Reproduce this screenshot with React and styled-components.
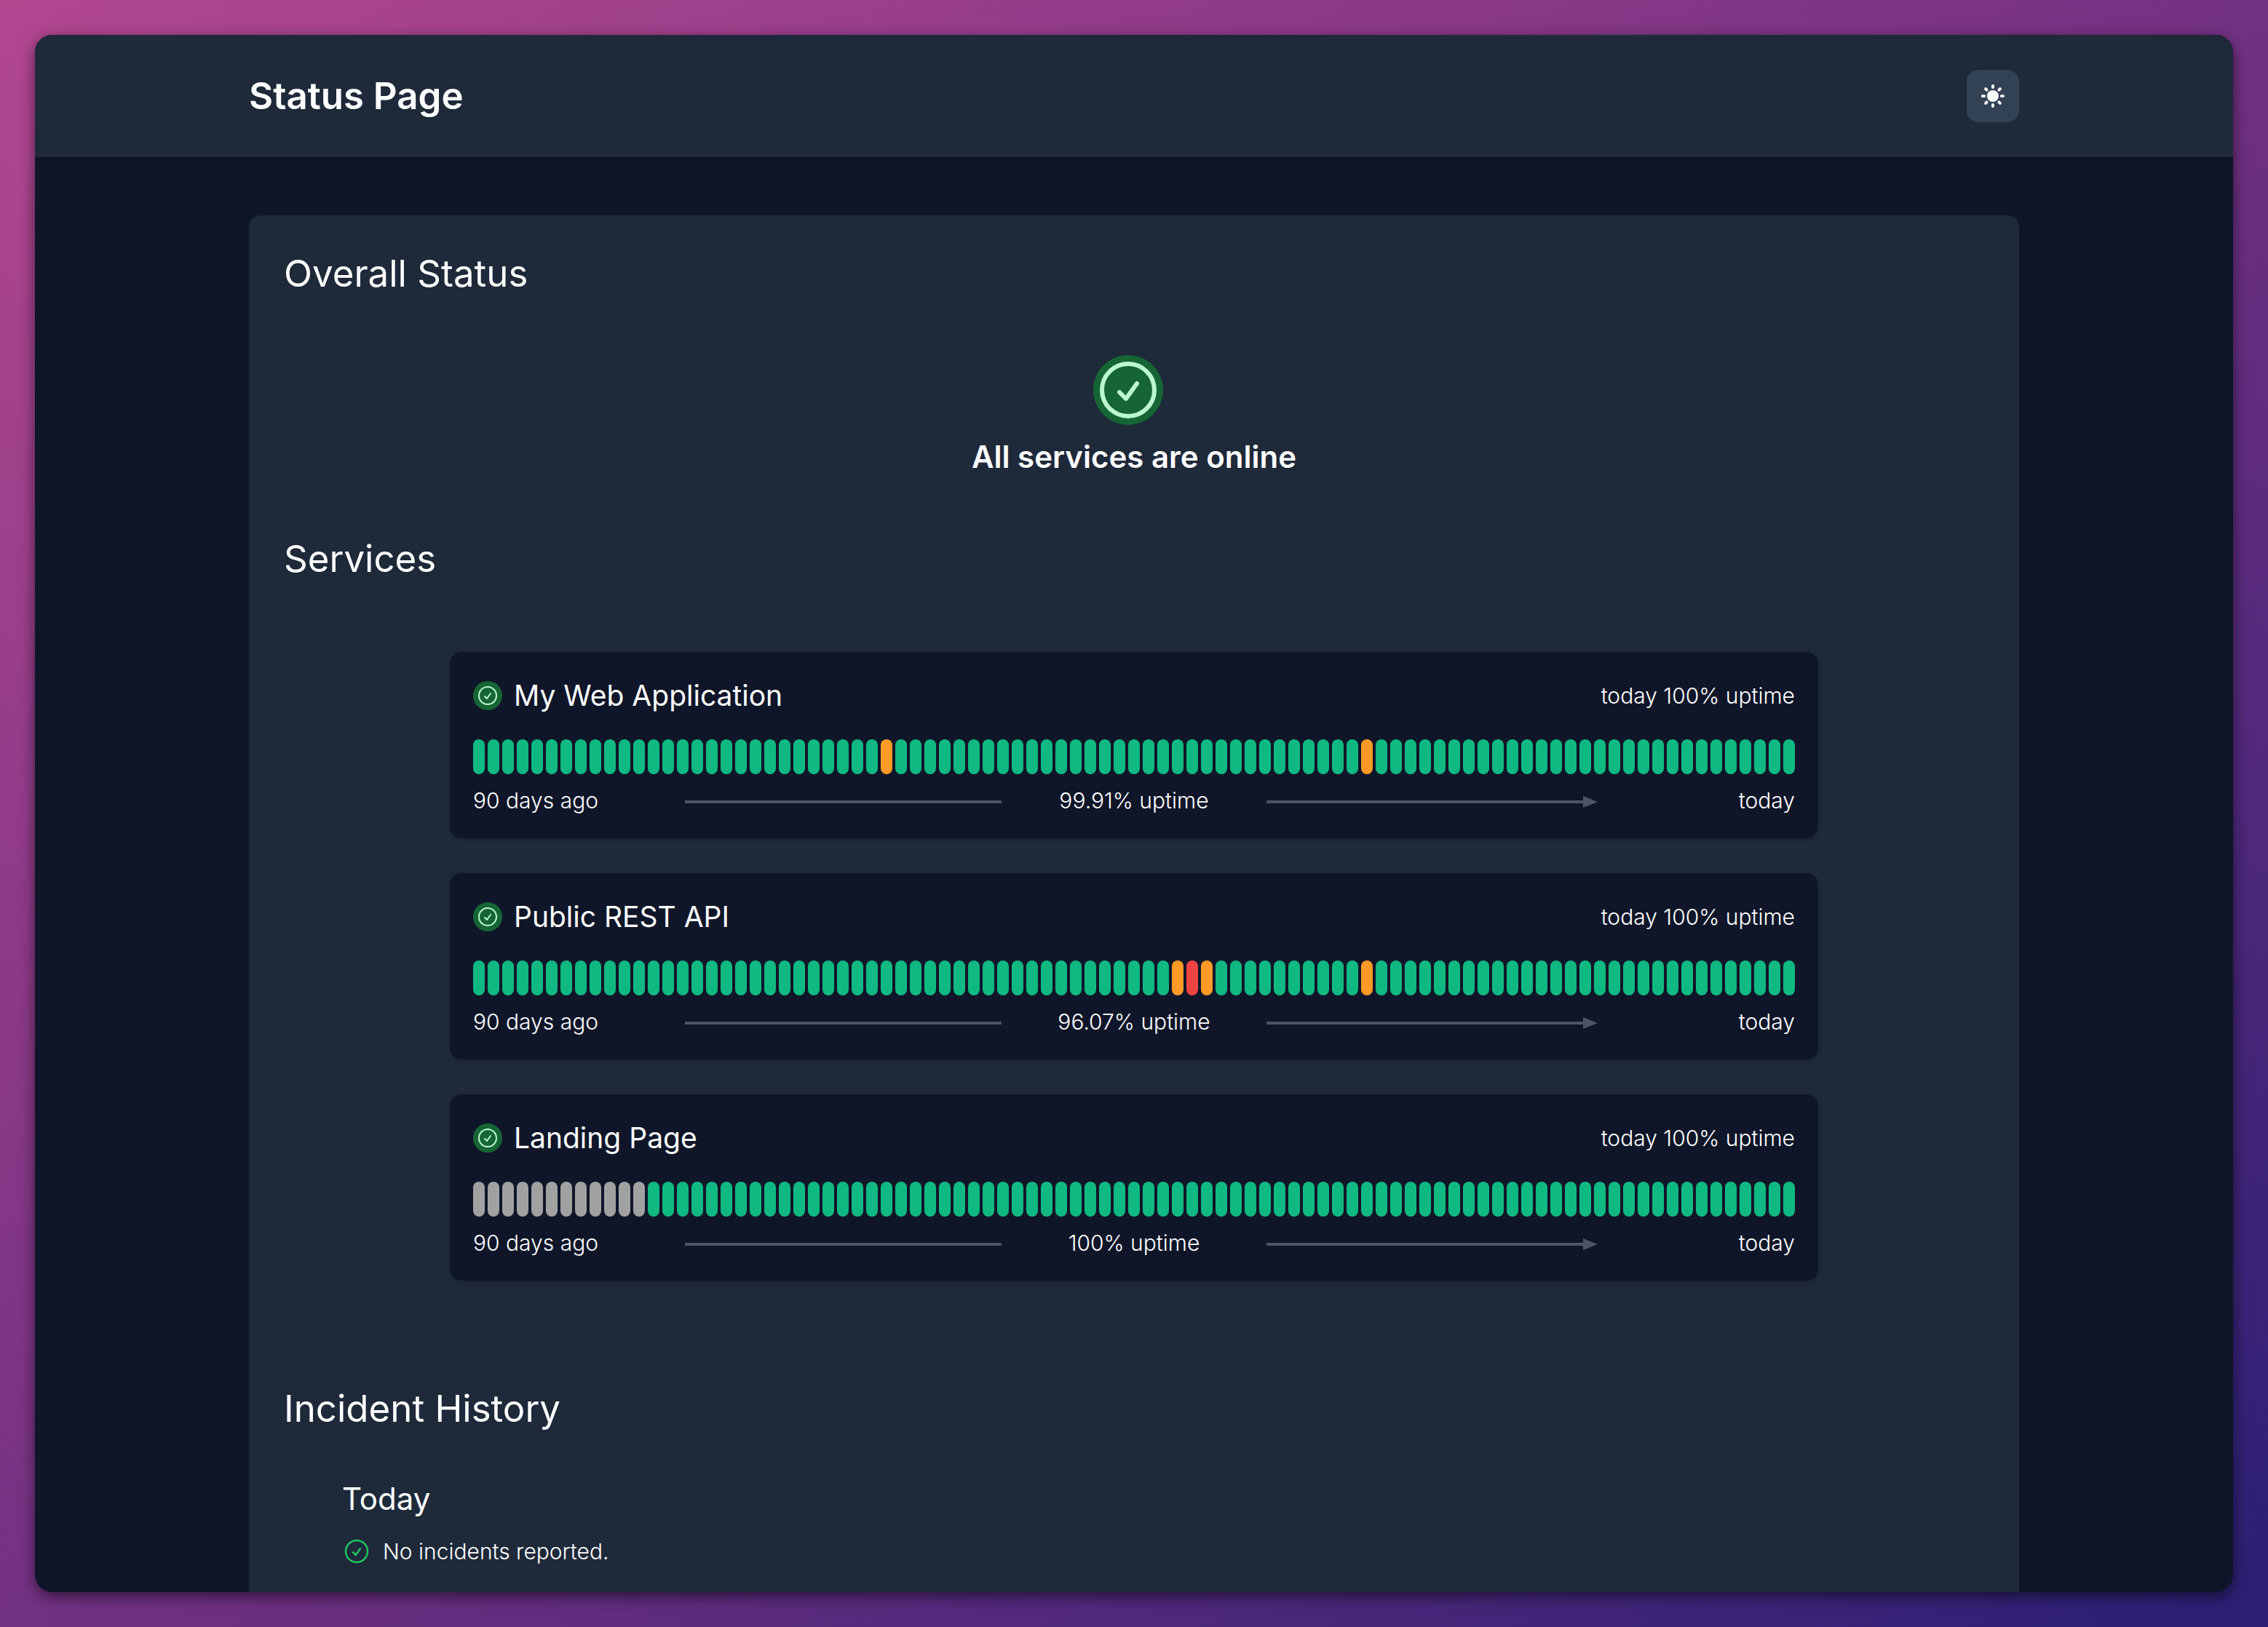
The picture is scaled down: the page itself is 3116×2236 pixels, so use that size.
import React from "react";
import styled, { createGlobalStyle } from "styled-components";

const GlobalStyle = createGlobalStyle`
  *, *::before, *::after { box-sizing: border-box; }
  html, body { margin: 0; padding: 0; }
  body {
    font-family: Inter, "Open Sans", sans-serif;
    font-size: 30px;
    line-height: 40px;
    color: #ffffff;
  }
  h1, h2, h3, p, ul { margin: 0; padding: 0; font-weight: 400; }
  ul { list-style: none; }
`;

const Backdrop = styled.div`
  height: 100vh;
  padding: 48px;
  overflow: hidden;
  background: linear-gradient(to bottom right, #b24790 0%, #733182 50%, #2a1f74 100%);
`;

const Window = styled.div`
  height: 100%;
  overflow: hidden;
  border-radius: 24px;
  background: #101629;
  box-shadow: 0 6px 20px rgba(0, 0, 0, 0.55);
`;

const Container = styled.div`
  max-width: 2560px;
  margin: 0 auto;
  padding: 0 64px;
`;

const Header = styled.header`
  padding: 48px 0;
  background: #1e293a;
  box-shadow: 0 2px 6px rgba(0, 0, 0, 0.15);
`;

const HeaderRow = styled(Container)`
  display: flex;
  align-items: center;
  justify-content: space-between;
`;

const SiteTitle = styled.h1`
  font-size: 51px;
  line-height: 72px;
  font-weight: 600;
`;

const ThemeButton = styled.button`
  display: flex;
  align-items: center;
  justify-content: center;
  width: 72px;
  height: 72px;
  padding: 0;
  border: 0;
  border-radius: 16px;
  background: #334155;
  color: inherit;
  cursor: pointer;
`;

const Main = styled(Container).attrs({ as: "main" })`
  margin-top: 80px;
`;

const Panel = styled.div`
  padding: 48px 48px 96px;
  border-radius: 16px;
  background: #1e293a;
  box-shadow: 0 20px 30px rgba(0, 0, 0, 0.05);
`;

const SectionTitle = styled.h2`
  font-size: 51px;
  line-height: 64px;
`;

const Overall = styled.div`
  display: flex;
  flex-direction: column;
  align-items: center;
  gap: 16px;
  padding: 80px 0;
`;

const OverallText = styled.p`
  font-size: 42px;
  line-height: 56px;
  font-weight: 600;
`;

const IconDisc = styled.span`
  display: flex;
  flex: none;
  padding: ${(p) => (p.$large ? 0 : 4)}px;
  margin-right: 16px;
  border-radius: 50%;
  background: #166534;
  color: #bbf7d0;
`;

const ServiceList = styled.ul`
  display: flex;
  flex-direction: column;
  gap: 48px;
  width: fit-content;
  margin: 0 auto;
  padding: 96px 0 144px;
`;

const ServiceCard = styled.li`
  padding: 32px;
  border-radius: 16px;
  background: #101629;
  box-shadow: 0 2px 6px rgba(0, 0, 0, 0.15);
`;

const ServiceHeader = styled.div`
  display: flex;
  align-items: center;
`;

const ServiceName = styled.h3`
  flex: 1;
  font-size: 39px;
  line-height: 56px;
`;

const SmallText = styled.p`
  font-size: 30px;
  line-height: 40px;
  font-weight: 300;
  text-align: ${(p) => p.$align || "left"};
  white-space: nowrap;
`;

const Days = styled.div`
  display: flex;
  gap: 4px;
  margin: 32px 0 16px;
`;

const dayColors = { up: "#10b981", degraded: "#ff9a26", down: "#ef4444", none: "#a1a1a1" };

const Day = styled.span`
  width: 16px;
  height: 48px;
  border-radius: 8px;
  background: ${(p) => dayColors[p.$state]};
`;

const Timeline = styled.div`
  display: grid;
  grid-template-columns: 4fr 6fr 5fr 6fr 4fr;
  align-items: center;

  > * { min-width: 0; }
`;

const Rule = styled.span`
  position: relative;
  height: 4px;
  margin-top: 4px;
  background: #4b5563;
`;

const ArrowHead = styled.svg`
  position: absolute;
  left: 100%;
  top: -6px;
`;

const Incident = styled.div`
  display: flex;
  flex-direction: column;
  gap: 24px;
  padding: 64px 80px 0;
`;

const IncidentDate = styled.h3`
  font-size: 42px;
  line-height: 56px;
`;

const IncidentRow = styled.div`
  display: flex;
  align-items: center;
  gap: 16px;
  color: #22c55e;

  ${SmallText} { color: #ffffff; }
`;

const CheckIcon = ({ size }) => (
  <svg width={size} height={size} viewBox="0 0 24 24" fill="none" stroke="currentColor"
    strokeWidth="1.5" strokeLinecap="round" strokeLinejoin="round" aria-hidden="true">
    <path d="M9 12.75L11.25 15 15 9.75M21 12a9 9 0 11-18 0 9 9 0 0118 0z" />
  </svg>
);

const SunIcon = () => (
  <svg width="32" height="32" viewBox="0 0 32 32" fill="currentColor" aria-hidden="true">
    <circle cx="16" cy="16" r="8" />
    {[0, 45, 90, 135, 180, 225, 270, 315].map((a) => (
      <rect key={a} x="14" y="0" width="4" height="6" rx="2" transform={`rotate(${a} 16 16)`} />
    ))}
  </svg>
);

const DAY_COUNT = 91;

const services = [
  { name: "My Web Application", uptime: "99.91%", marks: { 28: "degraded", 61: "degraded" }, untracked: 0 },
  { name: "Public REST API", uptime: "96.07%", marks: { 48: "degraded", 49: "down", 50: "degraded", 61: "degraded" }, untracked: 0 },
  { name: "Landing Page", uptime: "100%", marks: {}, untracked: 12 },
];

const Service = ({ name, uptime, marks, untracked }) => (
  <ServiceCard>
    <ServiceHeader>
      <IconDisc><CheckIcon size={32} /></IconDisc>
      <ServiceName>{name}</ServiceName>
      <SmallText>today 100% uptime</SmallText>
    </ServiceHeader>
    <Days>
      {Array.from({ length: DAY_COUNT }, (_, i) => (
        <Day key={i} $state={i < untracked ? "none" : marks[i] || "up"} />
      ))}
    </Days>
    <Timeline>
      <SmallText>90 days ago</SmallText>
      <Rule />
      <SmallText $align="center">{uptime} uptime</SmallText>
      <Rule>
        <ArrowHead width="20" height="16" viewBox="0 0 20 16" aria-hidden="true">
          <path d="M0 0L20 8L0 16Z" fill="#4b5563" />
        </ArrowHead>
      </Rule>
      <SmallText $align="right">today</SmallText>
    </Timeline>
  </ServiceCard>
);

export default function App() {
  return (
    <>
      <GlobalStyle />
      <Backdrop>
        <Window>
          <Header>
            <HeaderRow>
              <SiteTitle>Status Page</SiteTitle>
              <ThemeButton type="button" aria-label="Toggle theme"><SunIcon /></ThemeButton>
            </HeaderRow>
          </Header>
          <Main>
            <Panel>
              <SectionTitle>Overall Status</SectionTitle>
              <Overall>
                <IconDisc $large><CheckIcon size={96} /></IconDisc>
                <OverallText>All services are online</OverallText>
              </Overall>
              <SectionTitle>Services</SectionTitle>
              <ServiceList>
                {services.map((s) => <Service key={s.name} {...s} />)}
              </ServiceList>
              <SectionTitle>Incident History</SectionTitle>
              <Incident>
                <IncidentDate>Today</IncidentDate>
                <IncidentRow>
                  <CheckIcon size={40} />
                  <SmallText>No incidents reported.</SmallText>
                </IncidentRow>
              </Incident>
            </Panel>
          </Main>
        </Window>
      </Backdrop>
    </>
  );
}
